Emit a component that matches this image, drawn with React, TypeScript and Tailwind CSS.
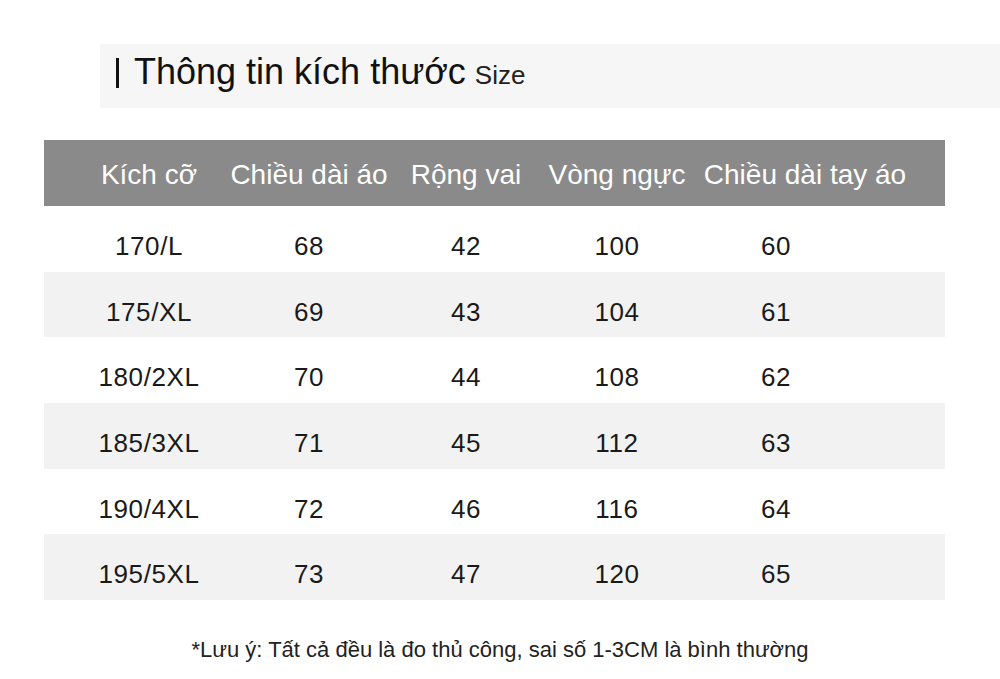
const headers = ['Kích cỡ', 'Chiều dài áo', 'Rộng vai', 'Vòng ngực', 'Chiều dài tay áo'];

const rows = [
  ['170/L', '68', '42', '100', '60'],
  ['175/XL', '69', '43', '104', '61'],
  ['180/2XL', '70', '44', '108', '62'],
  ['185/3XL', '71', '45', '112', '63'],
  ['190/4XL', '72', '46', '116', '64'],
  ['195/5XL', '73', '47', '120', '65'],
];

export default function App() {
  return (
    <div className="w-[1000px] h-[679px] bg-white font-['Liberation_Sans',Arial,sans-serif] text-[#1a1a1a] overflow-hidden">
      <div className="pt-[44px] pl-[100px]">
        <div className="h-[64px] bg-[#f6f6f6] flex items-center pl-[16px] pb-[8px]">
          <div className="w-[3px] h-[30px] bg-[#111] mr-[15px] mt-[1px]" />
          <span className="text-[36px] leading-none text-[#111]">Thông tin kích thước</span>
          <span className="text-[26px] leading-none ml-[9px] mt-[6px] text-[#222]">Size</span>
        </div>
      </div>

      <div className="mt-[32px] ml-[44px] w-[901px]">
        <div className="grid grid-cols-[170px_150px_164px_138px_238px] pl-[20px] items-center h-[66px] pt-[4px] bg-[#8a8a8a] text-white text-[28px]">
          {headers.map((h) => (
            <div key={h} className="flex justify-center whitespace-nowrap">
              {h}
            </div>
          ))}
        </div>
        {rows.map((r, i) => (
          <div
            key={r[0]}
            className={`grid grid-cols-[170px_150px_164px_138px_180px] pl-[20px] items-center h-[65.7px] pt-[15px] text-[26px] tracking-[0.6px] ${i % 2 === 1 ? 'bg-[#f2f2f2]' : 'bg-white'}`}
          >
            {r.map((c, j) => (
              <div key={j} className="text-center whitespace-nowrap">
                {c}
              </div>
            ))}
          </div>
        ))}
      </div>

      <div className="mt-[33px] text-center text-[22px] text-[#222]">
        *Lưu ý: Tất cả đều là đo thủ công, sai số 1-3CM là bình thường
      </div>
    </div>
  );
}
